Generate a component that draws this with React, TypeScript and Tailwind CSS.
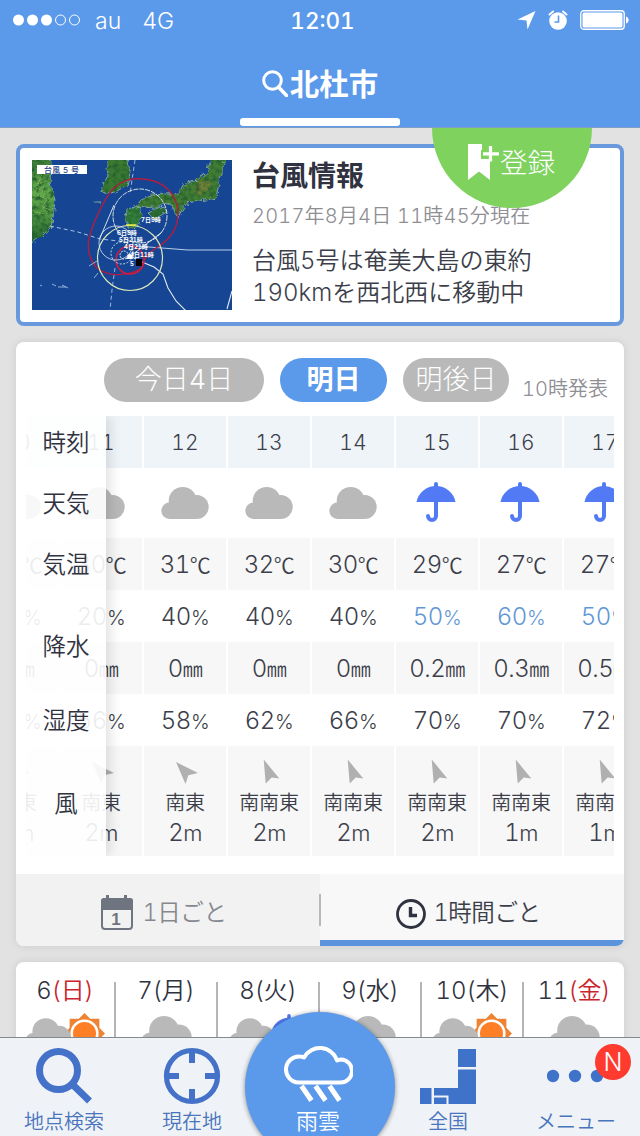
import clsx from 'clsx';

interface Hour {
  time: string;
  icon: 'cloud' | 'umbrella';
  temp: number;
  chance: number;
  rain: string;
  humidity: number;
  wind: string;
  speed: number;
}

interface Day {
  day: number;
  weekday: string;
  holiday: boolean;
  icon: 'cloud' | 'cloudSun' | 'cloudRain';
}

const hours: Hour[] = [
  { time: '10', icon: 'cloud', temp: 29, chance: 20, rain: '0', humidity: 58, wind: '南東', speed: 1 },
  { time: '11', icon: 'cloud', temp: 30, chance: 20, rain: '0', humidity: 56, wind: '南東', speed: 2 },
  { time: '12', icon: 'cloud', temp: 31, chance: 40, rain: '0', humidity: 58, wind: '南東', speed: 2 },
  { time: '13', icon: 'cloud', temp: 32, chance: 40, rain: '0', humidity: 62, wind: '南南東', speed: 2 },
  { time: '14', icon: 'cloud', temp: 30, chance: 40, rain: '0', humidity: 66, wind: '南南東', speed: 2 },
  { time: '15', icon: 'umbrella', temp: 29, chance: 50, rain: '0.2', humidity: 70, wind: '南南東', speed: 2 },
  { time: '16', icon: 'umbrella', temp: 27, chance: 60, rain: '0.3', humidity: 70, wind: '南南東', speed: 1 },
  { time: '17', icon: 'umbrella', temp: 27, chance: 50, rain: '0.5', humidity: 72, wind: '南南東', speed: 1 },
];

const days: Day[] = [
  { day: 6, weekday: '日', holiday: true, icon: 'cloudSun' },
  { day: 7, weekday: '月', holiday: false, icon: 'cloud' },
  { day: 8, weekday: '火', holiday: false, icon: 'cloudRain' },
  { day: 9, weekday: '水', holiday: false, icon: 'cloud' },
  { day: 10, weekday: '木', holiday: false, icon: 'cloudSun' },
  { day: 11, weekday: '金', holiday: true, icon: 'cloud' },
];

const Cloud = ({ className }: { className?: string }) => (
  <svg viewBox="0 0 48 32" className={className} fill="#b9b9b9">
    <circle cx="8.500" cy="23.800" r="8.200" />
    <circle cx="21.700" cy="14" r="14" />
    <circle cx="35.700" cy="20" r="12" />
    <path d="M8.500 17h27.500v15H8.500z" />
  </svg>
);

const Umbrella = ({ className }: { className?: string }) => (
  <svg viewBox="0 0 40 40" className={className}>
    <path d="M.5 20A19.900 19.900 0 0 1 39.500 20z" fill="#537af5" />
    <path d="M20 2v4M20 19v15a4 4 0 0 1-8 0" fill="none" stroke="#537af5" strokeWidth="4" strokeLinecap="round" />
  </svg>
);

const Sun = ({ className }: { className?: string }) => (
  <svg viewBox="0 0 40 40" className={className}>
    <path
      d="M20 0l5.500 5.500h9v9L40 20l-5.500 5.500v9h-9L20 40l-5.500-5.500h-9v-9L0 20l5.500-5.500v-9h9z"
      fill="#ee8433"
    />
    <circle cx="20" cy="20" r="12.500" fill="#ff7f27" stroke="#fff" strokeWidth="2.500" />
  </svg>
);

const WindArrow = ({ wind }: { wind: string }) => (
  <svg viewBox="0 0 26 26" className="h-[26px] w-[26px]" fill="#b0b0b0">
    {wind === '南東' ? <path d="M4 3l22 11-9.700 2.300L13.500 25z" /> : <path d="M7.700.500l15.600 19-7.600-1-6 6z" />}
  </svg>
);

const StatusBar = () => (
  <div className="grid h-10 grid-cols-3 items-center pl-3 pr-[11px] text-[23px] leading-none">
    <div className="flex items-center">
      <svg viewBox="0 0 70 12" className="h-3 w-[70px]" fill="#fff">
        <circle cx="6.500" cy="6" r="5.500" />
        <circle cx="20.500" cy="6" r="5.500" />
        <circle cx="34.500" cy="6" r="5.500" />
        <circle cx="48.500" cy="6" r="5" fill="none" stroke="#fff" />
        <circle cx="62.500" cy="6" r="5" fill="none" stroke="#fff" />
      </svg>
      <span className="ml-[13px] pt-0.5">au</span>
      <span className="ml-[21px] pt-0.5">4G</span>
    </div>
    <div className="pl-1 pt-0.5 text-center text-[22.500px] font-[450]">12:01</div>
    <div className="flex items-center justify-end gap-3">
      <svg viewBox="0 0 20 20" className="h-5 w-5" fill="#fff">
        <path d="M19.500 1l-8 18.500-1-9L1.500 9.500z" />
      </svg>
      <svg viewBox="0 0 20 20" className="h-5 w-5">
        <circle cx="10" cy="11" r="8.800" fill="#fff" />
        <path d="M1.500 4.500L5 1.500M18.500 4.500L15 1.500" stroke="#fff" strokeWidth="2" strokeLinecap="round" />
        <path d="M10.500 5.500V12H6.500" fill="none" stroke="#5b99eb" strokeWidth="1.600" />
      </svg>
      <svg viewBox="0 0 49 20" className="h-5 w-[49px]">
        <rect x=".75" y=".75" width="43.500" height="18.500" rx="3" fill="none" stroke="#fff" strokeWidth="1.300" />
        <rect x="2.500" y="2.500" width="40" height="15" rx="1.500" fill="#fff" />
        <path d="M46 6.500c3.500 1 3.500 6 0 7z" fill="#fff" />
      </svg>
    </div>
  </div>
);

const Header = () => (
  <header className="relative z-20 flex h-32 shrink-0 flex-col border-b border-[#7e9cc4] bg-[#5b99eb] text-white">
    <StatusBar />
    <div className="flex flex-1 items-center justify-center gap-[2px] pt-[9px]">
      <svg viewBox="0 0 26 27" className="h-[27px] w-[26px]" fill="none" stroke="#fff" strokeWidth="3">
        <circle cx="10.500" cy="10.500" r="8.800" />
        <path d="M16.500 17l8 8.500" strokeWidth="3.500" strokeLinecap="round" />
      </svg>
      <h1 className="text-[29.500px] font-bold leading-[44px]">北杜市</h1>
    </div>
    <div className="mx-auto mb-px h-2 w-40 rounded-[3px] bg-white" />
  </header>
);

const TyphoonMap = () => (
  <svg viewBox="0 0 200 150" className="h-[150px] w-[200px] shrink-0 bg-[#164594]">
    <defs>
      <filter id="terrain" x="-5%" y="-5%" width="110%" height="110%">
        <feTurbulence type="fractalNoise" baseFrequency="0.22" numOctaves="3" seed="4" result="noise" />
        <feDisplacementMap in="SourceGraphic" in2="noise" scale="6" result="land" />
        <feColorMatrix in="noise" values="0 0 0 0 .02  0 0 0 0 .12  0 0 0 0 .03  0 2.600 0 0 -1" result="dark" />
        <feComposite in="dark" in2="land" operator="in" result="shade" />
        <feMerge>
          <feMergeNode in="land" />
          <feMergeNode in="shade" />
        </feMerge>
      </filter>
      <linearGradient id="china" x1="0" y1="0" x2="0" y2="1">
        <stop offset="0" stopColor="#3d7a35" />
        <stop offset=".4" stopColor="#63ab4c" />
        <stop offset=".7" stopColor="#4c9140" />
        <stop offset="1" stopColor="#1f5c2b" />
      </linearGradient>
    </defs>
    <g filter="url(#terrain)" stroke="#a9c8cf" strokeWidth=".7">
      <path d="M-4-4H17l3 16-2 12 5 16-2 17-2 10-10 10-13 8z" fill="url(#china)" />
      <path d="M77-4h18l3 17-3 12-10 6-9 3-7-2 2-8 5-8-2-8z" fill="#3b7a33" />
      <path
        d="M179-4h14l-3 17-4 15-2 10-16 3-13 2-5 7-4 7-4-5-2-7-9-2-6 4-22 1 6-8 12-5 14-1 12-1 4-8 14-5 11-8z"
        fill="#437d36"
      />
      <path d="M166 22l10-3 4 6-12 9-8-2z" fill="#6f7f38" stroke="none" />
      <path d="M115 52l16-6 4 6-13 7z" fill="#2e6d35" />
      <path d="M95 49l12-3 3 9-4 11-9 3-3-10z" fill="#35803a" />
      <path d="M63 42h6v1h-6z" fill="#2c7034" />
    </g>
    <path d="M11 12l-5 12 8-3M4 28l9 4M5 35l10 4-5 8 9 3M4 52l9 2" stroke="#b7d36c" strokeWidth=".6" fill="none" strokeDasharray="2 1" />
    <g fill="none" strokeWidth=".9">
      <path d="M18 66l28 6 22 7 28 3" stroke="#b9d2ef" strokeDasharray="4 3" />
      <path d="M103 0l-5 34M83 108l-3 22-2 20" stroke="#a9c4e8" strokeDasharray="4 3" />
      <path d="M104 86l26 2 26 2h44" stroke="#c9dcf2" />
      <path d="M96 95l14 7 12 5 9 7 5 14 8 13 10 10M200 131l-5 18" stroke="#e3edf6" strokeWidth="1.100" />
      <path
        d="M82 28c10-10 25-11 40-7 15 5 24 18 24 33 0 16-10 27-22 34-8 5-13 11-14 20-14 9-36 9-46-1-7-9-9-19-7-28 3-14 15-41 25-51z"
        stroke="#b31d3f"
        strokeWidth="1.400"
      />
      <circle cx="108" cy="56" r="27" stroke="#e8f0e8" strokeDasharray="5 1" />
      <circle cx="98" cy="98" r="32.500" stroke="#dbe8b8" strokeWidth="1.200" />
      <circle cx="98" cy="100" r="14" stroke="#d01d40" strokeWidth="1.500" />
      <circle cx="90" cy="93" r="11" stroke="#dbe8f5" strokeDasharray="2 1.500" />
      <circle cx="92" cy="95" r="4" stroke="#fff" strokeDasharray="2 1" />
      <circle cx="84" cy="83" r="17" stroke="#dbe8f5" strokeWidth=".8" />
      <path d="M82 45L68 78M130 72l-30 23" stroke="#e8f0f5" />
      <path d="M8 125l2 1M20 124l4 2M26 127h8M30 125l6 3M62 118l4-5M57 106l8-5" stroke="#9fbbe0" />
      <path d="M94 65h10" stroke="#e8ec4a" strokeWidth="1.500" />
    </g>
    <g fontSize="6" fontWeight="bold" fill="#fff">
      <text x="109" y="62">7日9時</text>
      <text x="85" y="75">6日9時</text>
      <text x="87" y="82">5日21時</text>
      <text x="92" y="89">4日21時</text>
      <text x="98" y="97">4日11時</text>
      <text x="98" y="106">5</text>
    </g>
    <path d="M94 99l4-6 3 6z" fill="#fff" />
    <rect x="104" y="99" width="6" height="7" fill="#000" />
    <rect x="5" y="5" width="50" height="9" fill="#fff" />
    <text x="12" y="12.500" fontSize="8" fontWeight="500" fill="#23407f" textLength="35">
      台風 5 号
    </text>
  </svg>
);

const TyphoonCard = () => (
  <section className="flex h-[182px] shrink-0 rounded-lg border-4 border-[#6799dc] bg-white p-3">
    <TyphoonMap />
    <div className="ml-[20px] pt-0.5">
      <h2 className="text-[28px] font-bold leading-[28px] text-[#30333f]">台風情報</h2>
      <p className="mt-[14px] whitespace-nowrap text-[20px] leading-[24px] tracking-[0.2px] text-[#8e8e93]">
        2017年8月4日 11時45分現在
      </p>
      <p className="mt-[17px] whitespace-nowrap text-[24px] leading-[32px] text-[#3c3f4a]">
        台風5号は奄美大島の東約
        <br />
        190kmを西北西に移動中
      </p>
    </div>
  </section>
);

const RegisterButton = () => (
  <button className="absolute left-[432px] top-0 z-10 flex h-20 w-40 justify-center rounded-b-full bg-[#80d25f] pt-4 pr-[1px] text-white">
    <svg viewBox="0 0 32 37" className="h-[37px] w-8" fill="#fff">
      <path d="M0 0h14v6h-1v9h8v2h1v19L11 27.500 0 36z" />
      <path d="M22.500 2v15.500M15 9.800h16" stroke="#fff" strokeWidth="3.200" />
    </svg>
    <span className="pt-0.5 text-[27.500px] font-light leading-[35px]">登録</span>
  </button>
);

const HourColumn = ({ hour }: { hour: Hour }) => (
  <div className="flex w-[82px] shrink-0 flex-col whitespace-nowrap text-center text-[24px] tracking-[-0.5px] text-[#3c3f4a]">
    <div className="h-[52px] bg-[#eff4f8] text-[21px] leading-[53px] tracking-[0.2px]">{hour.time}</div>
    <div className="flex h-[70px] items-center justify-center">
      {hour.icon === 'cloud' ? <Cloud className="mb-px h-8 w-12" /> : <Umbrella className="mb-0.5 mr-[2px] h-10 w-10" />}
    </div>
    <div className="h-[52px] bg-[#f7f7f7] leading-[53px]">
      {hour.temp}
      <span className="font-['Noto_Sans_CJK_JP'] text-[21px] leading-none">℃</span>
    </div>
    <div className={clsx('h-[52px] leading-[53px]', hour.chance >= 50 && 'text-[#5f97d6]')}>
      {hour.chance}
      <span className="text-[20px]">%</span>
    </div>
    <div className="h-[52px] bg-[#f7f7f7] leading-[53px]">
      {hour.rain}
      <span className="text-[20px] leading-none">㎜</span>
    </div>
    <div className="h-[52px] leading-[53px]">
      {hour.humidity}
      <span className="text-[20px]">%</span>
    </div>
    <div className="flex h-[110px] flex-col items-center bg-[#f7f7f7] pt-[13px]">
      <WindArrow wind={hour.wind} />
      <div className="mt-[6px] text-[20px] leading-[24px] tracking-[-0.2px]">{hour.wind}</div>
      <div className="mt-[2px] leading-[32px]">
        {hour.speed}
        <span className="text-[22px]">m</span>
      </div>
    </div>
  </div>
);

const rowLabels = [
  { label: '時刻', className: 'h-[52px] pt-[2px]' },
  { label: '天気', className: 'h-[70px] pt-[2px]' },
  { label: '気温', className: 'h-[52px] pt-[2px]' },
  { label: '降水', className: 'h-[112px] pt-[2px]' },
  { label: '湿度', className: 'h-[36px] pt-[2px]' },
  { label: '風', className: 'h-[118px] pt-[13px]' },
];

const HourlyTable = () => (
  <div className="relative ml-[10px] mt-[14px] h-[440px] w-[588px] overflow-hidden">
    <div className="-ml-[50px] flex gap-[2px]">
      {hours.map((hour) => (
        <HourColumn key={hour.time} hour={hour} />
      ))}
    </div>
    <div className="absolute inset-y-0 left-0 w-20 bg-white/90 text-[23.500px] text-[#30333f] shadow-[4px_0_12px_rgba(0,0,0,0.12)]">
      {rowLabels.map((row) => (
        <div key={row.label} className={clsx('flex items-center justify-center', row.className)}>
          {row.label}
        </div>
      ))}
    </div>
  </div>
);

const ForecastCard = () => (
  <section className="flex h-[604px] shrink-0 flex-col overflow-hidden rounded-lg bg-white shadow-[0_0_8px_rgba(0,0,0,0.1)]">
    <div className="ml-[88px] mt-4 flex h-11 text-[27px] leading-[44px] text-white">
      <button className="w-40 rounded-full bg-[#b9b9b9] font-light">今日4日</button>
      <button className="ml-4 w-[107px] rounded-full bg-[#5b99eb] font-bold">明日</button>
      <button className="ml-4 w-[106px] rounded-full bg-[#b9b9b9] font-light">明後日</button>
      <span className="ml-[13px] whitespace-nowrap pt-[18px] text-[20px] leading-[27px] text-[#8e8e93]">10時発表</span>
    </div>
    <HourlyTable />
    <div className="relative mt-auto grid h-[72px] grid-cols-[304px_304px] text-[23.500px] leading-[36px]">
      <button className="flex items-center justify-center gap-[8px] bg-[#f2f2f2] pr-[9px] pt-[5px] text-[#85888f]">
        <svg viewBox="0 0 34 36" className="h-9 w-[34px]" fill="none">
          <rect x="2" y="4" width="30" height="30" rx="3" stroke="#6f7580" strokeWidth="2" />
          <path d="M1 15V6q0-3 3-3h2V0h3v3h15V0h3v3h3q3 0 3 3v9z" fill="#6f7580" />
          <text x="16" y="29.500" fontSize="17" fontWeight="bold" fill="#6f7580" textAnchor="middle" fontFamily="Liberation Sans">
            1
          </text>
        </svg>
        <span className="tracking-[-0.4px]">1日ごと</span>
      </button>
      <button className="flex items-center justify-center gap-[6px] border-b-[6px] border-[#5b94dd] bg-[#f8f8f8] pr-[8px] pt-[12px] text-[#3c3f4a]">
        <svg viewBox="0 0 32 32" className="mb-px mt-0.5 h-8 w-8" fill="none" stroke="#30333f">
          <circle cx="16" cy="16" r="13.500" strokeWidth="2.800" />
          <path d="M15.500 9v8.500h6.500" strokeWidth="3.400" />
        </svg>
        <span className="tracking-[-0.4px]">1時間ごと</span>
      </button>
      <div className="absolute left-[303px] top-5 h-8 w-[2px] bg-[#b5b8bd]" />
    </div>
  </section>
);

const DayIcon = ({ icon }: { icon: Day['icon'] }) => {
  if (icon === 'cloud') return <Cloud className="mx-auto mt-px h-[34px] w-[51px]" />;
  return (
    <div className="flex justify-center">
      <Cloud className="relative z-10 mt-[3px] h-[31px] w-[46px] shrink-0" />
      {icon === 'cloudSun' ? (
        <Sun className="-ml-[7px] -mt-[2px] h-[41px] w-[41px] shrink-0" />
      ) : (
        <Umbrella className="-ml-1 -mt-px h-9 w-9 shrink-0" />
      )}
    </div>
  );
};

const WeekCard = () => (
  <section className="h-40 shrink-0 rounded-lg bg-white pt-5 shadow-[0_0_8px_rgba(0,0,0,0.1)]">
    <div className="grid h-full grid-cols-[98px_102px_102px_102px_102px_102px]">
      {days.map((d, i) => (
        <div key={d.day} className={clsx('min-w-0', i > 0 && 'border-l-2 border-[#b5b5b5]')}>
          <div className="h-[33px] whitespace-nowrap text-center text-[24px] leading-[17px] tracking-[-0.2px] text-[#30333f]">
            {d.day}
            <span className={clsx(d.holiday && 'text-[#c9232b]')}>({d.weekday})</span>
          </div>
          <DayIcon icon={d.icon} />
        </div>
      ))}
    </div>
  </section>
);

const TabBar = () => (
  <nav className="relative z-20 grid h-[99px] shrink-0 grid-cols-5 border-t border-[#85888c] bg-[#eff3f7] text-[20px] leading-[28px] text-[#4a74bc]">
    <button className="flex flex-col items-center pt-[9px]">
      <svg viewBox="0 0 58 58" className="h-[58px] w-[58px]" fill="none" stroke="#4472c8" strokeWidth="7">
        <circle cx="23.500" cy="23.500" r="19" />
        <path d="M36.500 36.500L54.500 54" />
      </svg>
      <span className="mt-[3px]">地点検索</span>
    </button>
    <button className="flex flex-col items-center pt-[9px]">
      <svg viewBox="0 0 58 58" className="h-[58px] w-[58px]" fill="none" stroke="#4472c8">
        <circle cx="29" cy="29" r="25.500" strokeWidth="5.200" />
        <path d="M29 3v13M29 42v13M3 29h13M42 29h13" strokeWidth="6" />
      </svg>
      <span className="mt-[3px]">現在地</span>
    </button>
    <div className="relative">
      <button className="absolute -left-[11px] -top-[26px] flex h-[150px] w-[150px] flex-col items-center rounded-full bg-[#5b99eb] pr-[4px] pt-[29px] text-[22px] leading-[28px] text-white shadow-[0_1px_5px_rgba(0,0,0,0.45)]">
        <svg viewBox="0 0 70 62" className="h-[62px] w-[70px]" fill="none" stroke="#fff" strokeWidth="4">
          <path
            d="M15.500 41.500A13 13 0 0 1 16.500 15.500Q19 15.500 21 16.500A18 18 0 0 1 54 19.500Q55 18.500 58 18.500A11.500 11.500 0 0 1 57 41.500z"
            strokeLinejoin="round"
          />
          <path d="M18.500 45l10 14.500M32.500 45l10 14.500M46.500 45l10 14.500" strokeWidth="5" />
        </svg>
        <span className="mt-[4px]">雨雲</span>
      </button>
    </div>
    <button className="flex flex-col items-center pt-[9px]">
      <svg viewBox="0 0 58 58" className="h-[58px] w-[58px]" fill="#3f72c9">
        <path d="M39 2h18v18H39zM39 22.500h18V57H29.500v-8.500H15V41h24zM1 41h11.500v16H1zM15 50.500h12.500V57H15z" />
      </svg>
      <span className="mt-[3px]">全国</span>
    </button>
    <button className="relative flex flex-col items-center pt-[9px]">
      <svg viewBox="0 0 58 58" className="h-[58px] w-[58px]" fill="#3f72c9">
        <circle cx="6" cy="29" r="6.200" />
        <circle cx="28" cy="29" r="6.200" />
        <circle cx="50" cy="29" r="6.200" />
      </svg>
      <span className="mt-[3px]">メニュー</span>
      <span className="absolute right-[9px] top-[6px] flex h-9 w-9 items-center justify-center rounded-full bg-[#ff3b30] text-[25px] leading-none text-white">
        N
      </span>
    </button>
  </nav>
);

export default function App() {
  return (
    <div
      lang="ja"
      className="relative flex h-[1136px] w-[640px] flex-col overflow-hidden bg-[#e2e2e2] font-['Inter','Noto_Sans_CJK_JP',sans-serif] font-[350] tabular-nums"
    >
      <Header />
      <main className="relative flex min-h-0 flex-1 flex-col gap-4 overflow-hidden px-4 pt-4">
        <RegisterButton />
        <TyphoonCard />
        <ForecastCard />
        <WeekCard />
      </main>
      <TabBar />
    </div>
  );
}
